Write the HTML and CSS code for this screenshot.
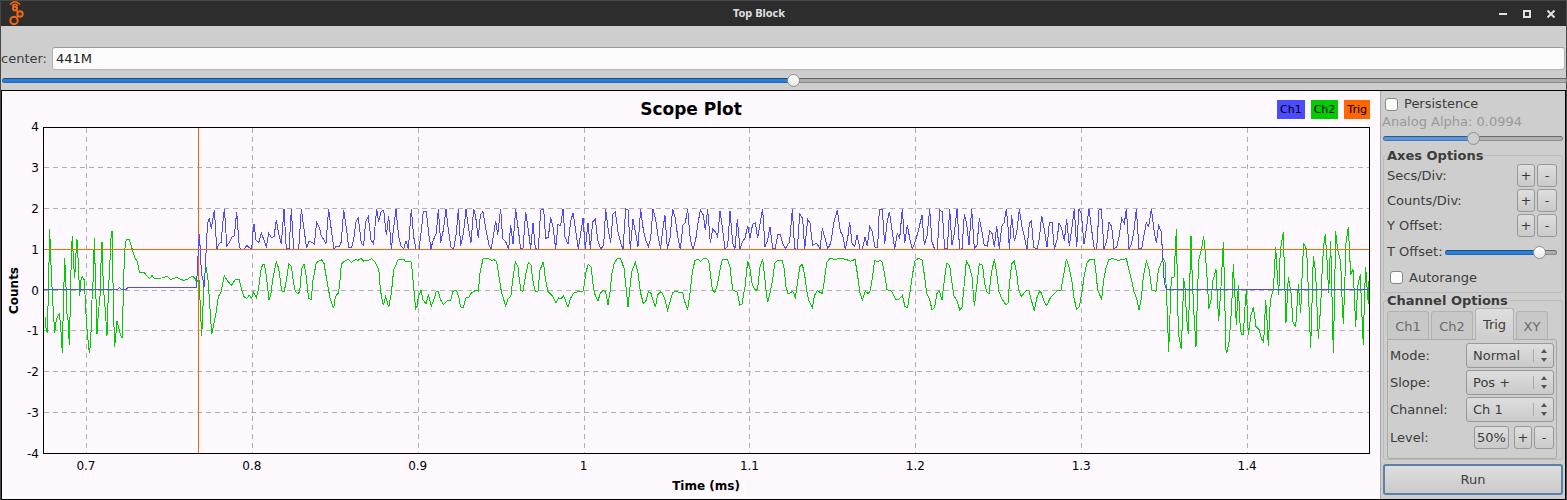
FILE: index.html
```html
<!DOCTYPE html>
<html lang="en">
<head>
    <meta charset="UTF-8">
    <meta name="viewport" content="width=device-width, initial-scale=1.0">
    <title>Top Block</title>
    <link rel="stylesheet" href="styles.css">
</head>
<body>
    <div class="window">
        <header class="titlebar">
            <svg class="logo" width="18" height="25" viewBox="0 0 18 25">
                <path class="waves" d="M3 3.500Q8 -2 13 3.500M5 5Q8 1.500 11 5"/>
                <circle cx="8" cy="7.500" r="2"/>
                <circle cx="13" cy="13" r="2.700"/>
                <circle cx="7" cy="19.500" r="3.700"/>
                <path class="waves" d="M9 9L11 11M11 15L9 17"/>
            </svg>
            <h1>Top Block</h1>
            <div class="window-buttons">
                <button aria-label="Minimize"><svg width="8" height="8"><path d="M0 4H8"/></svg></button>
                <button aria-label="Maximize"><svg width="8" height="8"><path d="M1 1H7V7H1Z"/></svg></button>
                <button aria-label="Close"><svg width="8" height="8"><path d="M0.500 0.500L7.500 7.500M7.500 0.500L0.500 7.500"/></svg></button>
            </div>
        </header>

        <div class="center-row">
            <label for="center">center:</label>
            <input type="text" id="center" value="441M">
        </div>
        <input type="range" class="slider center-slider" aria-label="center" min="0" max="1000" value="506">

        <main class="scope">
            <section class="plot">
                <div class="plot-head">
                    <h2>Scope Plot</h2>
                    <div class="legend">
                        <span class="ch1">Ch1</span>
                        <span class="ch2">Ch2</span>
                        <span class="trig">Trig</span>
                    </div>
                </div>
                <div class="plot-body">
                    <div class="y-title">Counts</div>
                    <div class="y-ticks">
                        <span>4</span><span>3</span><span>2</span><span>1</span><span>0</span><span>-1</span><span>-2</span><span>-3</span><span>-4</span>
                    </div>
                    <svg class="graph" id="graph" viewBox="132 -186 3975 975" preserveAspectRatio="none">
                        <path class="grid" d="M132 -67.500H4107M132 55.500H4107M132 178.500H4107M132 301.500H4107M132 421.500H4107M132 544.500H4107M132 667.500H4107"/>
                        <path class="grid" d="M259.500 -186V789M757.500 -186V789M1255.500 -186V789M1753.500 -186V789M2248.500 -186V789M2746.500 -186V789M3244.500 -186V789M3742.500 -186V789"/>
                        <path class="trig-line" d="M595.500 -186V789"/>
                        <polyline class="ch2-line" id="ch2"/>
                        <polyline class="ch1-line" id="ch1"/>
                        <path class="trig-line" d="M132 178.500H4107"/>
                    </svg>
                </div>
                <div class="x-ticks">
                    <span>0.7</span><span>0.8</span><span>0.9</span><span>1</span><span>1.1</span><span>1.2</span><span>1.3</span><span>1.4</span>
                </div>
                <div class="x-title">Time (ms)</div>
            </section>

            <aside class="panel">
                <label class="check"><input type="checkbox">Persistence</label>
                <label class="alpha" for="alpha">Analog Alpha: 0.0994</label>
                <input type="range" class="slider alpha-slider" id="alpha" min="0" max="100" value="50" disabled>

                <fieldset class="axes">
                    <legend>Axes Options</legend>
                    <div class="row"><span>Secs/Div:</span><button>+</button><button>-</button></div>
                    <div class="row"><span>Counts/Div:</span><button>+</button><button>-</button></div>
                    <div class="row"><span>Y Offset:</span><button>+</button><button>-</button></div>
                    <div class="row offset">
                        <label for="toffset">T Offset:</label>
                        <input type="range" class="slider offset-slider" id="toffset" min="0" max="100" value="90">
                    </div>
                    <label class="check autorange"><input type="checkbox">Autorange</label>
                </fieldset>

                <fieldset class="channels">
                    <legend>Channel Options</legend>
                    <div class="tabs">
                        <button>Ch1</button>
                        <button>Ch2</button>
                        <button class="active">Trig</button>
                        <button>XY</button>
                    </div>
                    <div class="tab-page">
                        <div class="field">
                            <label for="mode">Mode:</label>
                            <div class="select"><select id="mode"><option>Normal</option></select><svg width="6" height="13"><path d="M0 4L3 0L6 4ZM0 9L3 13L6 9Z"/></svg></div>
                        </div>
                        <div class="field">
                            <label for="slope">Slope:</label>
                            <div class="select"><select id="slope"><option>Pos +</option></select><svg width="6" height="13"><path d="M0 4L3 0L6 4ZM0 9L3 13L6 9Z"/></svg></div>
                        </div>
                        <div class="field">
                            <label for="channel">Channel:</label>
                            <div class="select"><select id="channel"><option>Ch 1</option></select><svg width="6" height="13"><path d="M0 4L3 0L6 4ZM0 9L3 13L6 9Z"/></svg></div>
                        </div>
                        <div class="row level"><span>Level:</span><button class="wide">50%</button><button>+</button><button>-</button></div>
                    </div>
                </fieldset>

                <button class="run">Run</button>
            </aside>
        </main>
    </div>
    <script src="chart.js"></script>
</body>
</html>
```
FILE: styles.css
```css
* {
    box-sizing: border-box;
}

body {
    margin: 0;
    background-color: #cecece;
    color: #3c3c3c;
    font-family: "DejaVu Sans", sans-serif;
    font-size: 13px;
    line-height: 16px;
}

h1, h2 {
    margin: 0;
}

button, input, select {
    margin: 0;
    color: inherit;
    font: inherit;
}

.window {
    display: flex;
    flex-direction: column;
    min-height: 100vh;
    border: 1px solid #484848;
}

/* title bar */
.titlebar {
    display: grid;
    grid-template-columns: 1fr auto 1fr;
    align-items: center;
    height: 25px;
    padding: 0 11px 0 6px;
    background-color: #2d2d2d;
    color: #e0e0e0;
}

.titlebar h1 {
    margin: 0 44px 2px 0;
    font: bold 11px/16px "Noto Sans", sans-serif;
}

.logo {
    fill: none;
    stroke: #f26a10;
    stroke-width: 2;
}

.logo .waves {
    stroke-width: 1.4;
}

.window-buttons {
    display: flex;
    justify-content: flex-end;
    gap: 16px;
}

.window-buttons button {
    display: flex;
    padding: 0;
    border: none;
    background: none;
}

.window-buttons svg {
    fill: none;
    stroke: #e0e0e0;
    stroke-width: 2;
}

/* center frequency */
.center-row {
    display: flex;
    align-items: center;
    gap: 5px;
    height: 44px;
    padding: 21px 1px 0 0;
}

.center-row input {
    flex: 1;
    height: 23px;
    padding: 0 3px;
    border: 1px solid #b4b4b4;
    border-top-color: #999;
    border-radius: 3px;
    background-color: #fcfcfc;
    color: #222;
}

/* sliders */
.slider {
    display: block;
    width: 100%;
    height: 14px;
    appearance: none;
    background: none;
    --fill: 50%;
}

.slider::-webkit-slider-runnable-track {
    height: 5px;
    border: 1px solid #909090;
    border-color: rgba(0, 0, 0, 0.4) rgba(0, 0, 0, 0.25) rgba(0, 0, 0, 0.2);
    border-radius: 3px;
    background: linear-gradient(to right, #2a7fd8 var(--fill), #adadad var(--fill)) border-box;
}

.slider::-webkit-slider-thumb {
    appearance: none;
    width: 13px;
    height: 13px;
    margin-top: -5px;
    border: 1px solid #909090;
    border-radius: 50%;
    background: linear-gradient(#fff, #e8e8e8);
}

.center-slider {
    --fill: 50.600%;
    margin: 3px 0 3px 1px;
}

.alpha-slider {
    margin: 0 0 3px;
}

.alpha-slider::-webkit-slider-runnable-track {
    background: linear-gradient(to right, #5596dc 50%, #b2b2b2 50%) border-box;
}

.alpha-slider::-webkit-slider-thumb {
    background: #cecece;
}

.offset-slider {
    --fill: 88%;
    flex: 1;
    min-width: 0;
}

/* plot */
.scope {
    display: flex;
    flex: 1;
    border: 1px solid #000;
}

.plot {
    display: flex;
    flex: 1;
    flex-direction: column;
    min-width: 0;
    padding: 8px 10px 5px 4px;
    background-color: #fef8ff;
    color: #000;
    font-size: 12px;
}

.plot-head {
    display: grid;
    grid-template-columns: 1fr auto 1fr;
    height: 28px;
    padding-left: 6px;
}

.plot-head h2 {
    grid-column: 2;
    font-size: 17px;
    line-height: 20px;
}

.legend {
    display: flex;
    justify-content: flex-end;
    gap: 6px;
    padding-top: 1px;
    font-size: 11px;
}

.legend span {
    height: 19px;
    padding: 0 3px;
    line-height: 19px;
}

.ch1 { background-color: #4c4cff; }
.ch2 { background-color: #00cc00; }
.trig { background-color: #ff6600; }

.plot-body {
    display: flex;
    flex: 1;
}

.y-title {
    width: 16px;
    text-align: center;
    font-weight: bold;
    writing-mode: vertical-rl;
    transform: rotate(180deg);
}

.y-ticks {
    display: flex;
    flex-direction: column;
    justify-content: space-between;
    width: 17px;
    margin: -8px 4px -8px 0;
    text-align: right;
}

.graph {
    flex: 1;
    min-width: 0;
    height: 327px;
    border: 1px solid #000;
    background-color: #fef8ff;
    fill: none;
    shape-rendering: crispEdges;
}

.graph * {
    vector-effect: non-scaling-stroke;
}

.grid {
    stroke: #b0b0b0;
    stroke-dasharray: 5 4;
}

.ch1-line { stroke: #4c4cff; }
.ch2-line { stroke: #00cc00; }
.trig-line { stroke: #ff6600; }

.x-ticks {
    display: flex;
    margin: 4px 40px 4px -3px;
}

.x-ticks span {
    flex: 1;
    text-align: center;
}

.x-title {
    padding-left: 36px;
    font-weight: bold;
    text-align: center;
}

/* side panel */
.panel {
    display: flex;
    flex-direction: column;
    width: 185px;
    padding: 4px 2px 1px;
    border-left: 1px solid #a8a8a8;
}

.check {
    display: flex;
    align-items: center;
    gap: 6px;
    height: 18px;
    padding-left: 2px;
}

.check input {
    width: 13px;
    height: 13px;
    appearance: none;
    border: 1px solid #888;
    border-radius: 3px;
    background-color: #fcfcfc;
}

.alpha {
    height: 18px;
    margin-left: -1px;
    line-height: 18px;
    color: #999;
}

fieldset {
    min-width: 0;
    margin: 0;
    padding: 0 5px 0 3px;
    border: 1px solid #bbb;
    border-radius: 3px;
}

legend {
    padding: 0;
    font-weight: bold;
    line-height: 15px;
}

.row {
    display: flex;
    align-items: center;
    gap: 2px;
    height: 25px;
}

.row span {
    flex: 1;
}

.row button {
    width: 18px;
    height: 23px;
}

.row button:last-child {
    width: 20px;
}

.row button, .select select, .run {
    padding: 0;
    border: 1px solid #989898;
    border-radius: 3px;
    background: linear-gradient(#dedede, #cacaca);
}

.row.offset {
    height: 28px;
}

.autorange {
    height: 23px;
    padding-left: 3px;
}

.axes {
    height: 145px;
}

.tabs {
    display: flex;
    align-items: flex-end;
    gap: 2px;
}

.tabs button {
    width: 42px;
    height: 28px;
    padding: 2px 0 0;
    border: 1px solid #b2b2b2;
    border-bottom: none;
    border-radius: 3px 3px 0 0;
    background-color: #c8c8c8;
    color: #6a6a6a;
}

.tabs button.active {
    width: 39px;
    height: 32px;
    margin-bottom: -1px;
    padding: 0;
    background: linear-gradient(#dedede, #cecece);
    color: #3c3c3c;
}

.tabs button:last-child {
    width: 32px;
}

.tab-page {
    height: 120px;
    padding: 2px 2px 0;
    border: 1px solid #aaa;
    border-radius: 0 3px 3px 3px;
}

.field {
    display: flex;
    align-items: center;
    justify-content: space-between;
    height: 27px;
}

.select {
    display: grid;
    width: 88px;
}

.select > * {
    grid-area: 1 / 1;
}

.select select {
    height: 25px;
    padding: 0 6px;
    appearance: none;
}

.select svg {
    align-self: center;
    justify-self: end;
    width: 20px;
    padding-left: 7px;
    margin-right: 1px;
    border-left: 1px solid #aaa;
    fill: #555;
    pointer-events: none;
}

.level {
    height: 29px;
}

.row .wide {
    width: 35px;
    margin-right: 3px;
}

.run {
    height: 31px;
    margin-top: 4px;
    border: 2px solid #5c80a8;
}
```
FILE: chart.js
```javascript
// sample blocks: start offset followed by x,y pairs
const ch2 = [
    [0, "136,382 138,415 142,430 146,270 149,118 154,250 158,330 164,428 168,395 172,380 178,372 182,410 187,488 190,350 194,203 198,290 200,365 204,390 208,466 212,300 214,185 217,137 220,205 224,265 228,190 231,148 235,220 239,317 243,270 247,260 253,270 257,355 262,430 268,490 272,460 276,330 280,260 283,145 287,290 291,433 295,370 300,320 303,220 306,155 310,290 315,350 321,437 325,310 330,210 334,125 337,125 340,350 344,470 348,430 351,392 355,410 362,435 367,445 370,300 374,180 379,148 387,148 392,162 398,182 405,203 412,215 418,246 432,247 441,258 449,265 456,257 463,265 485,264 502,259 512,269 530,262 550,271 562,268 575,259 583,262 590,275 597,270 600,330 605,437 608,380 611,290 615,250 619,232 624,270 629,340 635,433 640,410 647,375 655,320 664,305 668,280 673,258 682,272 694,286 706,269 717,268 725,300 732,320 740,325 748,316"],
    [750, "5,325 11,307 19,322 25,300 32,245 38,222 43,222 50,265 57,330 63,310 68,270 74,240 79,215 86,235 91,270 95,303 103,304 110,265 116,222 124,228 130,275 136,305 144,311 149,305 155,235 162,221 168,255 173,300 176,326 184,328 189,270 199,218 207,213 214,209 222,220 229,262 235,295 240,325 251,355 256,320 266,308 270,270 274,222 284,213 295,209 304,217 316,209 324,211 332,205 341,213 352,212 364,206 374,215 384,235 388,250 391,300 400,346 407,319 416,352 424,310 431,240 445,208 463,209 466,214 477,213 484,216 490,280 497,356 501,350 505,320 513,301 519,330 528,341 535,313 544,348 551,330 559,304 565,305 572,330 580,343 592,333 602,330 609,304 619,301 626,320 632,351 640,352 648,323 656,322 663,310 675,302 685,303 690,250 699,206 715,205 725,212 732,209 740,215"],
    [1500, "0,280 5,310 10,325 17,348 24,328 33,317 38,270 46,215 54,230 58,270 63,302 69,304 76,260 85,218 93,225 98,270 106,303 114,303 120,240 130,215 136,265 144,305 157,317 168,338 176,324 182,327 191,317 204,352 211,326 220,310 235,304 250,303 258,245 265,223 273,230 280,290 286,318 294,332 301,310 309,302 317,306 324,344 330,305 336,250 343,218 353,205 362,206 372,235 378,290 384,352 389,300 395,245 406,217 414,250 421,305 430,341 438,332 445,304 453,310 466,352 473,315 483,305 492,320 503,361 510,335 518,307 530,304 540,308 548,308 554,335 563,358 570,310 577,245 585,211 595,208 602,214 612,205 620,206 626,212 632,260 637,300 645,307 652,285 660,240 667,208 683,209 690,230 698,300 712,306 719,345 726,343 735,290 743,214"],
    [2250, "0,237 7,285 18,304 23,295 30,230 38,208 44,260 49,310 53,336 60,310 68,270 74,220 84,211 97,211 103,240 108,290 114,312 122,308 128,304 136,322 143,275 149,230 157,223 164,255 170,300 176,330 187,352 194,315 202,302 210,307 217,310 222,280 230,218 240,205 255,208 272,205 290,209 302,214 315,208 322,250 330,310 337,331 346,304 355,311 361,302 367,265 374,211 384,215 391,211 397,217 405,260 411,299 425,304 436,327 447,328 457,316 465,350 473,352 480,305 488,250 495,213 505,205 516,209 524,260 530,310 538,325 546,359 554,352 561,310 568,302 576,331 583,270 590,220 599,226 606,280 612,318 620,330 629,359 636,352 642,290 649,213 658,228 666,260 673,349 680,290 688,220 698,227 704,280 710,305 717,311 724,250 733,208 740,250 747,305 755,325 768,345 774,340 778,285"],
    [2880, "155,222 163,213 170,250 176,300 184,319 198,303 207,302 214,330 223,363 230,325 239,303 245,310 251,332 260,347 270,325 283,311 294,301 303,300 310,260 319,208 328,235 336,275 342,325 350,358 358,350 366,305 373,255 381,218 390,209 403,208 408,250 413,300 425,328 431,270 438,235 447,208 460,206 475,211 499,206 507,240 515,270 522,305 530,325 537,360 544,325 550,260 559,213 568,240 575,300 588,304"],
    [3420, "55,240 62,222 70,205 75,215 78,280 82,370 86,485 90,375 94,262 102,262 105,200 109,118 112,270 115,430 124,478 128,370 131,265 136,300 139,375 145,433 149,290 153,138 157,270 162,375 168,470 172,330 176,210 184,180 191,139 196,190 203,290 206,357 213,330 218,275 228,238 232,320 236,394 243,290 250,157 254,300 257,475 260,490 268,450 275,350 280,223 285,320 289,405 295,285 300,400 304,433 310,433 315,350 319,300 325,436 332,380 340,350 348,410 358,420 364,445 371,457 377,330 381,390 385,467 391,330 400,300 407,172 411,240 416,316 421,180 430,125 434,270 438,398 445,260 453,310 459,395 467,412 475,283 482,370 487,240 491,160 500,180 505,300 512,475 516,340 520,197 527,250 531,350 535,446 542,350 547,230 551,165 556,133 561,210 566,308 572,154 576,320 580,490 584,300 587,124 593,180 602,215 606,320 610,403 615,260 618,160 625,112 632,254 639,238 643,310 647,412 653,290 661,253 665,360 670,466 673,330 677,230 681,290 685,341 687,273"]
];

const ch1 = [
    [0, "132,298 353,298 358,293 364,298 379,298 385,292 589,292 592,240 595,178 598,132 602,200 604,250 609,270 613,292 617,210 621,130 624,95 628,83 631,100 634,117 637,95 643,60 647,120 650,178 658,160 664,158 667,110 673,57 677,110 680,168 688,158 696,140 703,138 710,65 714,120 718,172 724,178 733,177 740,166 747,173 753,175"],
    [750, "4,178 7,160 9,125 12,103 18,150 26,158 34,130 42,150 49,170 56,130 65,143 72,140 79,90 86,130 94,163 102,57 109,177 117,176 124,57 131,177 146,177 154,57 161,110 170,175 177,153 186,157 193,162 200,97 208,112 214,138 228,160 236,57 244,120 252,177 259,168 269,168 274,155 281,60 290,120 296,172 305,172 311,150 318,95 325,84 334,160 341,165 347,95 355,80 363,150 371,163 375,110 380,57 386,95 393,65 401,60 409,136 416,77 424,177 430,120 438,58 446,140 453,168 461,177 468,153 475,176 484,57 491,140 498,178 507,177 514,120 520,64 529,64 536,130 543,176 549,152 559,130 565,57 572,158 580,120 588,57 595,120 603,172 611,177 619,130 625,57 632,168 641,125 648,57 655,110 663,158 671,57 677,80 685,145 691,75 699,65 708,120 717,165 723,178 730,140 737,92 743,135 749,80"],
    [1500, "2,57 8,145 18,157 26,178 32,106 39,163 47,57 55,120 62,177 69,176 77,66 85,120 92,176 99,100 106,176 115,178 122,60 131,58 137,145 145,142 152,82 159,110 167,177 174,103 182,107 189,57 195,140 204,163 212,95 219,68 226,115 235,176 242,130 249,85 256,176 264,98 271,177 278,95 286,87 293,150 302,178 311,165 317,57 324,115 332,158 339,72 346,66 354,125 361,155 369,178 377,57 384,60 391,177 399,88 407,130 414,170 422,57 430,120 437,150 445,170 452,145 459,57 467,90 475,145 482,176 488,120 495,76 502,176 510,145 518,57 526,85 533,140 541,178 549,105 556,97 563,57 571,150 579,178 587,150 594,100 601,60 610,75 616,120 623,57 631,160 638,117 646,125 653,140 660,62 668,120 675,176 683,170 690,62 698,160 705,176 712,88 720,177 727,155 735,145 743,107 750,145"],
    [2250, "8,102 16,99 23,145 31,95 38,57 45,170 53,150 60,110 68,176 75,176 84,133 91,133 98,160 106,176 119,155 127,57 134,176 142,178 149,72 158,85 164,178 173,88 180,100 188,165 200,160 210,177 217,115 225,145 233,177 242,160 252,95 262,60 271,125 278,135 286,178 293,145 299,95 306,160 314,170 321,135 330,177 337,177 345,142 352,167 359,110 367,125 375,172 383,172 388,57 397,58 404,163 411,100 418,65 427,125 434,177 442,130 449,145 457,57 464,160 472,105 480,150 487,177 494,160 503,130 516,76 523,165 531,138 539,57 546,155 554,178 562,177 569,60 577,65 584,177 592,176 599,57 606,165 613,130 621,57 629,178 636,176 643,73 650,100 657,165 665,57 673,176 681,165 688,85 697,130 703,167 712,168 719,122 726,130 733,170 740,108 748,176 755,110 762,98 769,57 775,120"],
    [2880, "148,178 155,76 163,152 170,130 178,57 186,110 193,140 201,178 208,100 214,92 221,172 231,178 238,145 245,77 253,120 261,172 268,98 276,97 283,177 291,150 297,100 305,115 313,152 320,88 328,168 336,110 343,57 350,172 357,57 364,70 372,163 380,110 387,57 395,120 403,178 410,177 417,60 424,58 432,176 440,155 447,97 455,110 462,176 470,172 477,140 485,84 493,100 499,57 507,177 515,160 522,120 529,57 537,176 545,176"],
    [3420, "5,176 12,135 19,98 26,110 34,57 42,120 49,158 56,107 64,125 68,200 73,278 80,298 687,298"]
];

function drawTrace(id, blocks) {
    const points = blocks.flatMap(([offset, data]) =>
        data.split(' ').map(pair => {
            const [x, y] = pair.split(',').map(Number);
            return (x + offset) + ',' + y;
        })
    );
    document.getElementById(id).setAttribute('points', points.join(' '));
}

drawTrace('ch2', ch2);
drawTrace('ch1', ch1);
```
